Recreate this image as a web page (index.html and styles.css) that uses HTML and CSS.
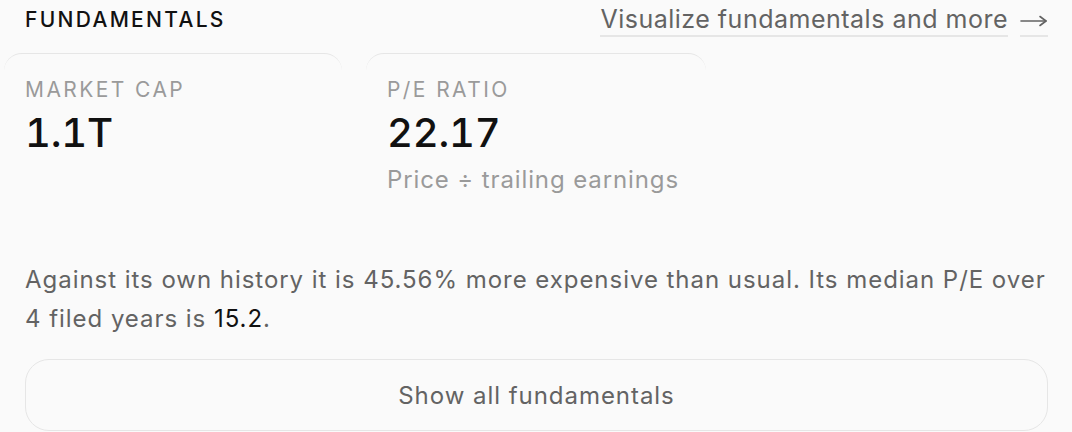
FILE: index.html
```html
<!DOCTYPE html>
<html>
  <head>
    <meta charset="utf-8">
    <link rel="stylesheet" href="styles.css">
  </head>
  <body>
    <section class="fundamentals">
      <div class="section-head">
        <h2 class="section-title">FUNDAMENTALS</h2>
        <a class="viz-link" href="#">
          <span class="viz-text">Visualize fundamentals and more</span>
          <span class="viz-arrow">
            <svg width="28" height="14" viewBox="0 0 28 14" fill="none" stroke="currentColor" stroke-width="1.6" stroke-linecap="round" stroke-linejoin="round">
              <path d="M1 7h25"/>
              <path d="M20 2.5l6 4.5-6 4.5"/>
            </svg>
          </span>
        </a>
      </div>

      <div class="stat-cards">
        <div class="stat-card">
          <div class="stat-label">MARKET CAP</div>
          <div class="stat-value">1.1T</div>
        </div>
        <div class="stat-card">
          <div class="stat-label">P/E RATIO</div>
          <div class="stat-value">22.17</div>
          <div class="stat-sub">Price ÷ trailing earnings</div>
        </div>
      </div>

      <p class="summary">Against its own history it is 45.56% more expensive than usual. Its median P/E over 4 filed years is <span class="hl">15.2</span>.</p>

      <button type="button" class="show-all">Show all fundamentals</button>
    </section>
  </body>
</html>
```

FILE: styles.css
```css
:root {
  --bg: #fafafa;
  --text-strong: #111111;
  --text-body: #636363;
  --text-muted: #9a9a9a;
  --line: #e6e6e6;
  --font: 'Inter', 'Noto Sans', sans-serif;
}

html, body {
  margin: 0;
  padding: 0;
  background: var(--bg);
}

body {
  font-family: var(--font);
  color: var(--text-body);
  overflow: hidden;
}

.fundamentals {
  padding: 4px 24px 0 25px;
}

.section-head {
  display: flex;
  justify-content: space-between;
  align-items: flex-start;
}

.section-title {
  margin: 0;
  padding-top: 2px;
  font-size: 21px;
  font-weight: 500;
  letter-spacing: 0.11em;
  line-height: 28px;
  color: var(--text-strong);
}

.viz-link {
  display: flex;
  gap: 12px;
  text-decoration: none;
  color: var(--text-body);
  font-size: 25px;
  line-height: 30px;
  letter-spacing: 0.02em;
}

.viz-link span {
  border-bottom: 2px solid var(--line);
  padding-bottom: 1px;
}

.viz-arrow {
  display: flex;
  align-items: center;
  padding-top: 3px;
}

.stat-cards {
  display: grid;
  grid-template-columns: 338px 340px;
  gap: 24px;
  margin: 16px 0 0 -21px;
}

.stat-card {
  border-top: 1.5px solid var(--line);
  border-radius: 18px 18px 0 0;
  padding: 22px 21px 0;
}

.stat-label {
  font-size: 21px;
  line-height: 28px;
  letter-spacing: 0.115em;
  color: var(--text-muted);
}

.stat-value {
  margin-top: 4px;
  font-size: 40px;
  line-height: 50px;
  font-weight: 500;
  letter-spacing: -0.005em;
  font-variant-numeric: tabular-nums;
  color: var(--text-strong);
}

.stat-sub {
  margin-top: 6px;
  font-size: 24px;
  line-height: 32px;
  letter-spacing: 0.037em;
  color: var(--text-muted);
}

.summary {
  margin: 64px 0 0;
  font-size: 24px;
  line-height: 39px;
  letter-spacing: 0.04em;
  color: var(--text-body);
}

.hl {
  color: var(--text-strong);
}

.show-all {
  display: block;
  width: 100%;
  height: 72px;
  margin-top: 21px;
  background: var(--bg);
  border: 1.5px solid var(--line);
  border-radius: 24px;
  font-family: var(--font);
  font-size: 24px;
  letter-spacing: 0.04em;
  color: var(--text-body);
  cursor: pointer;
}
```
